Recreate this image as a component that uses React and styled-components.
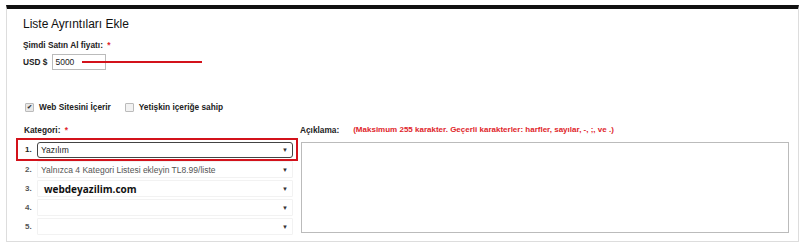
import React from "react";
import styled, { createGlobalStyle } from "styled-components";

const categories = [
  { no: "1.", text: "Yazılım", active: true },
  { no: "2.", text: "Yalnızca 4 Kategori Listesi ekleyin TL8.99/liste", hint: true },
  { no: "3.", text: "webdeyazilim.com", big: true },
  { no: "4.", text: "" },
  { no: "5.", text: "" },
];

const GlobalStyle = createGlobalStyle`
  body {
    margin: 0;
    background: #fff;
    font-family: "Liberation Sans", Arial, sans-serif;
    color: #222;
  }
`;

const App = () => {
  return (
    <Page>
      <GlobalStyle />
      <Panel>
        <Title>Liste Ayrıntıları Ekle</Title>
        <Label>
          Şimdi Satın Al fiyatı: <Star>*</Star>
        </Label>
        <PriceRow>
          <Label as="span">USD $</Label>
          <PriceInput defaultValue="5000" />
          <Underline />
        </PriceRow>
        <CheckRow>
          <Check>
            <Box checked>✔</Box>
            Web Sitesini İçerir
          </Check>
          <Check>
            <Box />
            Yetişkin içeriğe sahip
          </Check>
        </CheckRow>
        <Columns>
          <CategoryCol>
            <ColLabel>
              Kategori: <Star>*</Star>
            </ColLabel>
            <Rows>
              {categories.map((c) => (
                <Row key={c.no} $active={c.active}>
                  <Num $active={c.active}>{c.no}</Num>
                  <Select $active={c.active}>
                    <Option $hint={c.hint} $big={c.big}>
                      {c.text}
                    </Option>
                    <Arrow>▼</Arrow>
                  </Select>
                </Row>
              ))}
            </Rows>
          </CategoryCol>
          <DescCol>
            <DescHead>
              <ColLabel as="span">Açıklama:</ColLabel>
              <Rule>
                (Maksimum 255 karakter. Geçerli karakterler: harfler, sayılar,
                -, ;, ve .)
              </Rule>
            </DescHead>
            <TextArea />
          </DescCol>
        </Columns>
      </Panel>
    </Page>
  );
};

export default App;

const Page = styled.div`
  padding: 5px 3px 0 6px;
`;

const Panel = styled.div`
  width: 768px;
  height: 224px;
  border: 1px solid #ddd;
  border-top: 4px solid #111;
  padding: 8px 7px 0 16px;
  box-sizing: content-box;
`;

const Title = styled.h2`
  margin: 0;
  font-size: 12px;
  line-height: 14px;
  font-weight: normal;
  color: #111;
`;

const Label = styled.div`
  margin-top: 8px;
  font-size: 8.3px;
  line-height: 12px;
  font-weight: bold;
  color: #222;
`;

const Star = styled.span`
  color: #e0242a;
  margin-left: 2px;
`;

const PriceRow = styled.div`
  position: relative;
  margin-top: 3px;
  display: flex;
  align-items: center;
  gap: 5px;
  height: 16px;

  ${Label} {
    margin-top: 0;
  }
`;

const PriceInput = styled.input`
  width: 54px;
  height: 16px;
  box-sizing: border-box;
  border: 1px solid #bbb;
  padding: 0 2px;
  font-family: "Liberation Sans", Arial, sans-serif;
  font-size: 8.5px;
  color: #222;
  outline: none;
`;

const Underline = styled.div`
  position: absolute;
  left: 59px;
  top: 7px;
  width: 120px;
  height: 2px;
  background: #d3121b;
`;

const CheckRow = styled.div`
  margin-top: 31px;
  display: flex;
  align-items: center;
  gap: 14px;
  height: 12px;
  padding-left: 2px;
`;

const Check = styled.label`
  display: flex;
  align-items: center;
  gap: 5px;
  font-size: 8.3px;
  font-weight: bold;
  color: #222;
`;

const Box = styled.span`
  width: 7px;
  height: 7px;
  border: 1px solid #bbb;
  border-radius: 1px;
  background: ${(p) => (p.checked ? "#e8e8e8" : "#f2f2f2")};
  font-size: 6px;
  line-height: 7px;
  text-align: center;
  color: #333;
  overflow: hidden;
`;

const Columns = styled.div`
  margin-top: 11px;
  display: flex;
  gap: 5px;
`;

const CategoryCol = styled.div`
  width: 276px;
  margin-left: -4px;
`;

const ColLabel = styled.div`
  font-size: 8.3px;
  line-height: 12px;
  font-weight: bold;
  color: #222;
  padding-left: 5px;
`;

const Rows = styled.div`
  margin-top: 5px;
  display: flex;
  flex-direction: column;
  gap: 2px;
`;

const Row = styled.div`
  display: flex;
  align-items: center;
  height: 17px;
  padding-left: 6px;
  outline: ${(p) => (p.$active ? "2px solid #d3121b" : "none")};
  outline-offset: 1px;
  margin-bottom: ${(p) => (p.$active ? "1px" : "0")};
`;

const Num = styled.span`
  width: 12px;
  font-size: 8px;
  font-weight: bold;
  color: ${(p) => (p.$active ? "#222" : "#555")};
`;

const Select = styled.div`
  width: 256px;
  height: ${(p) => (p.$active ? "16px" : "17px")};
  box-sizing: border-box;
  display: flex;
  align-items: center;
  justify-content: space-between;
  padding: 0 3px 0 3px;
  border: 1px solid ${(p) => (p.$active ? "#444" : "#f2f2f2")};
  border-radius: ${(p) => (p.$active ? "3px" : "1px")};
  background: #fff;
`;

const Option = styled.span`
  font-family: ${(p) =>
    p.$big ? '"Open Sans", "DejaVu Sans", sans-serif' : '"Liberation Sans", Arial, sans-serif'};
  font-size: ${(p) => (p.$big ? "10px" : "8.5px")};
  font-weight: ${(p) => (p.$big ? "bold" : "normal")};
  color: ${(p) => (p.$hint ? "#555" : p.$big ? "#111" : "#222")};
  padding-left: ${(p) => (p.$big ? "3px" : "0")};
`;

const Arrow = styled.span`
  font-size: 6px;
  color: #333;
  margin-right: 1px;
`;

const DescCol = styled.div`
  width: 489px;
  display: flex;
  flex-direction: column;
`;

const DescHead = styled.div`
  display: flex;
  align-items: center;
  gap: 14px;

  ${ColLabel} {
    padding-left: 0;
  }
`;

const Rule = styled.span`
  font-size: 8px;
  line-height: 12px;
  font-weight: bold;
  color: #e0242a;
`;

const TextArea = styled.textarea`
  margin-top: 6px;
  margin-left: 1px;
  width: 488px;
  height: 91px;
  box-sizing: border-box;
  border: 1px solid #bbb;
  resize: none;
  outline: none;
`;
